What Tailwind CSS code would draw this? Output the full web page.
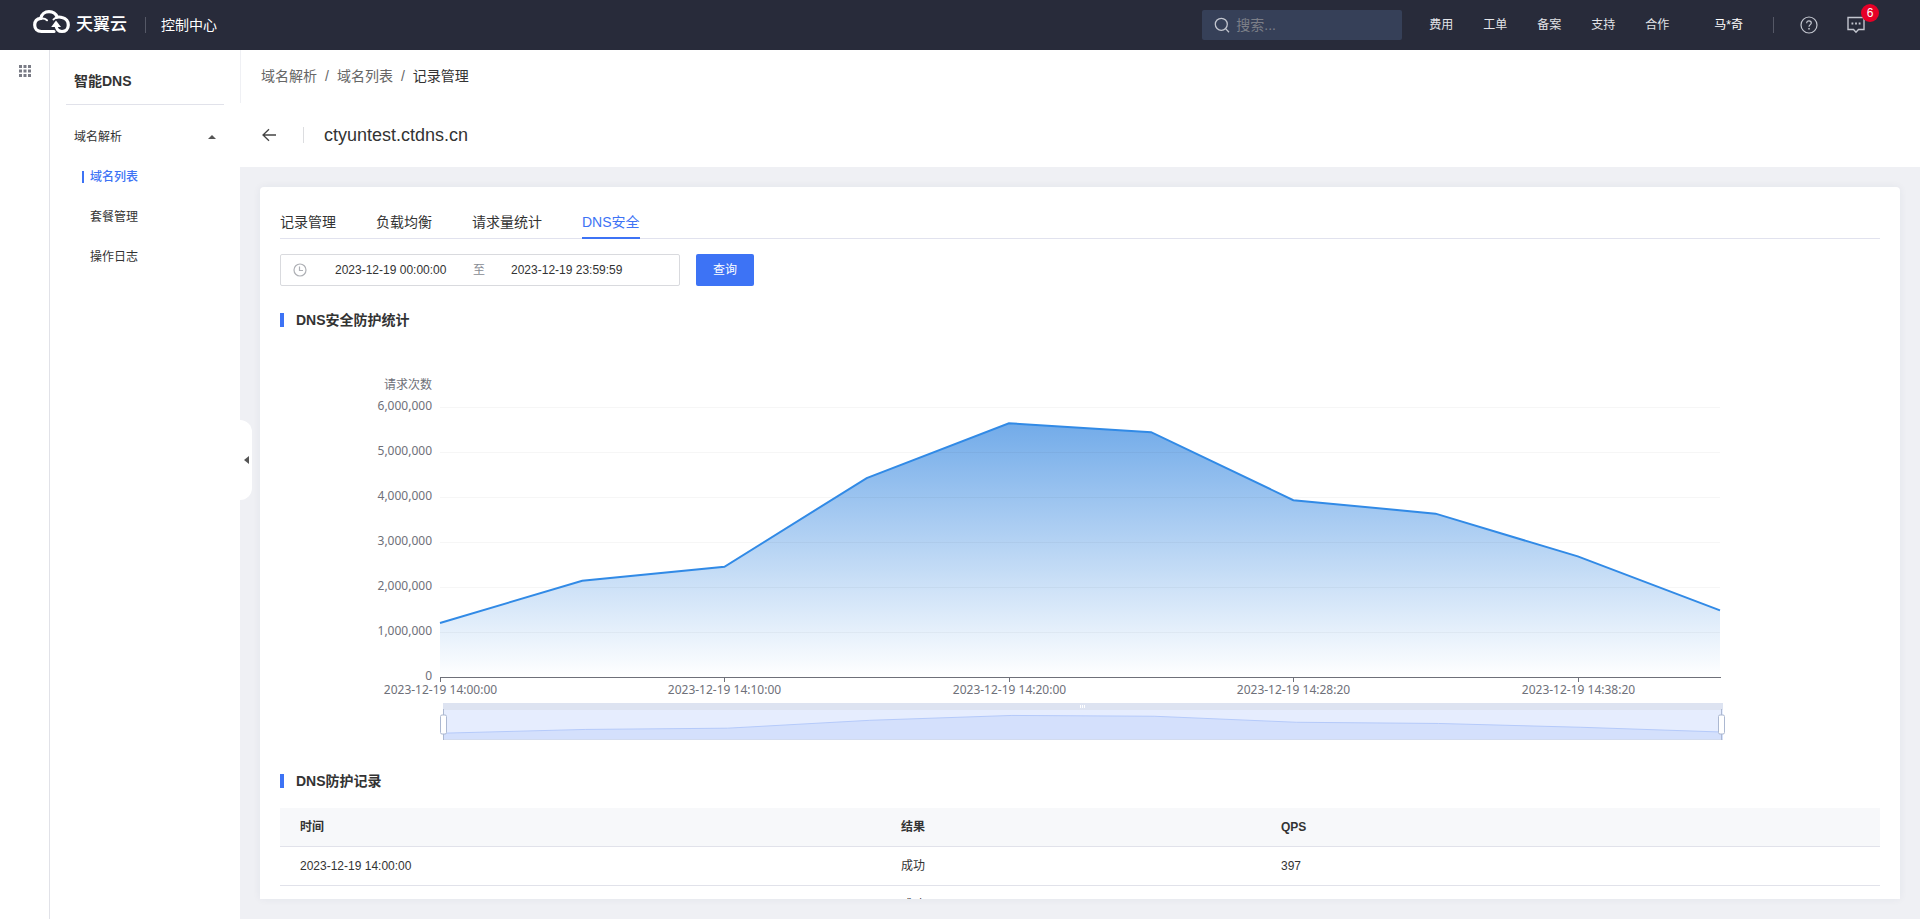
<!DOCTYPE html>
<html lang="zh-CN">
<head>
  <meta charset="UTF-8" />
  <meta name="viewport" content="width=device-width, initial-scale=1.0" />
  <title>智能DNS</title>
  <script src="https://cdn.jsdelivr.net/npm/@tailwindcss/browser@4"></script>
</head>
<body class="flex h-screen flex-col overflow-hidden bg-white font-['Liberation_Sans','Noto_Sans_CJK_SC',sans-serif] text-sm text-[#333]">

  <!-- Header -->
  <header class="flex h-[50px] shrink-0 items-center bg-[#282b3a] text-white">
    <a href="#" class="ml-8 flex items-center gap-1">
      <svg class="h-[30px] w-10" viewBox="0 0 40 30" fill="none" stroke="#fff" stroke-width="3.200" stroke-linecap="round">
        <path d="M22 21.500H9.500C5 21.500 2.700 18.500 2.700 15C2.700 11.300 5 8.700 8.800 8.300C9.500 4.300 12.800 1.700 17 1.700C21 1.700 24 4 25.200 7.200C27 6.800 28.500 7 30 7.500C34 8.500 36.300 11.500 36.300 15C36.300 19 33.500 21.500 30 21.500C26.500 21.500 24.200 19 24.200 15.500" />
        <path d="M9.500 8.700C11.500 8.400 13.500 9 15 10.300M25 7.400C23.500 7.800 22.300 8.500 21.500 9.500" stroke-width="2" />
        <path d="M19.200 17L24 10.500L29 17Z" fill="#fff" stroke="none" />
      </svg>
      <span class="text-[17px] font-medium leading-6">天翼云</span>
    </a>
    <span class="ml-[18px] h-4 w-px bg-[#555866]"></span>
    <a href="#" class="ml-[15px]">控制中心</a>

    <label class="ml-auto flex h-[30px] w-[200px] items-center rounded-xs bg-[#364058] pl-3">
      <svg class="h-4 w-4 shrink-0" viewBox="0 0 16 16" fill="none" stroke="#c3c6cf" stroke-width="1.300">
        <circle cx="7.300" cy="7.300" r="6" />
        <path d="M11.600 11.600L15 15.300" />
      </svg>
      <input type="text" placeholder="搜索..." aria-label="搜索" class="ml-1.5 w-36 bg-transparent text-sm outline-none placeholder:text-[#7c7f88]" />
    </label>
    <nav class="ml-[27px] flex gap-[30px] text-xs text-[#e3e4e8]">
      <a href="#">费用</a>
      <a href="#">工单</a>
      <a href="#">备案</a>
      <a href="#">支持</a>
      <a href="#">合作</a>
    </nav>
    <a href="#" class="ml-[45px] text-xs">马*奇</a>
    <span class="ml-[30px] h-4 w-px bg-[#555866]"></span>
    <button class="ml-[26px]" aria-label="帮助">
      <svg class="h-[18px] w-[18px]" viewBox="0 0 18 18" fill="none" stroke="#c3c6cf" stroke-width="1.200">
        <circle cx="9" cy="9" r="8" />
        <path d="M6.700 7.200C6.700 5.600 7.700 4.800 9 4.800C10.300 4.800 11.300 5.600 11.300 6.900C11.300 8.600 9 8.700 9 10.800" />
        <path d="M9 12V13.400" stroke-width="1.500" />
      </svg>
    </button>
    <button class="relative mr-[55px] ml-[29px]" aria-label="消息">
      <svg class="h-[18px] w-[18px]" viewBox="0 0 18 18" fill="none" stroke="#c3c6cf" stroke-width="1.400">
        <path d="M1 1.500H17V13.500H11.500L9 16.300L6.500 13.500H1Z" />
        <path d="M4.500 7.500H6.300M8.100 7.500H9.900M11.700 7.500H13.500" stroke-width="1.800" />
      </svg>
      <span class="absolute -top-3 left-3.5 h-[18px] w-[18px] rounded-full bg-[#e60027] text-xs leading-[18px]">6</span>
    </button>
  </header>

  <div class="flex min-h-0 flex-1">
    <!-- App rail -->
    <div class="flex w-[50px] shrink-0 justify-center border-r border-[#e1e2e8] pt-[15px]">
      <button class="h-3 w-3" aria-label="全部产品">
        <svg viewBox="0 0 12 12" fill="#797b85">
          <path d="M0 0h3v3H0zM4.500 0h3v3h-3zM9 0h3v3H9zM0 4.500h3v3H0zM4.500 4.500h3v3h-3zM9 4.500h3v3H9zM0 9h3v3H0zM4.500 9h3v3h-3zM9 9h3v3H9z" />
        </svg>
      </button>
    </div>

    <!-- Side menu -->
    <aside class="relative w-[190px] shrink-0 px-4">
      <h2 class="h-[55px] border-b border-[#e1e2ea] pt-[5px] pl-2 font-bold leading-[52px]">智能DNS</h2>
      <button class="mt-3 flex h-10 w-full items-center justify-between pr-2 pl-2 text-xs">
        域名解析
        <svg class="h-1 w-2" viewBox="0 0 8 4" fill="#555"><path d="M4 0L8 4H0Z" /></svg>
      </button>
      <ul class="pl-4 text-xs leading-10">
        <li class="flex items-center text-[#3d73f5]"><span class="h-3 w-0.5 bg-[#3d73f5]"></span><a href="#" class="ml-1.5 font-medium">域名列表</a></li>
        <li class="pl-2"><a href="#">套餐管理</a></li>
        <li class="pl-2"><a href="#">操作日志</a></li>
      </ul>
      <button class="absolute top-[370px] left-full flex h-20 w-3 items-center justify-center rounded-r-xl bg-white" aria-label="收起菜单">
        <svg class="h-2 w-[5px]" viewBox="0 0 5 8" fill="#555"><path d="M5 0V8L0 4Z" /></svg>
      </button>
    </aside>

    <main class="flex min-w-0 flex-1 flex-col bg-[#eff0f4]">
      <div class="h-[117px] shrink-0 bg-white">
        <nav class="flex h-[53px] items-center gap-2 border-l border-[#eff0f4] pb-0.5 pl-5 text-[#666]">
          <a href="#">域名解析</a>
          <span>/</span>
          <a href="#">域名列表</a>
          <span>/</span>
          <span class="text-[#333]">记录管理</span>
        </nav>
        <div class="flex h-16 items-center pl-[22px]">
          <button aria-label="返回">
            <svg class="h-3.5 w-3.5" viewBox="0 0 14 14" fill="none" stroke="#444" stroke-width="1.300"><path d="M14 7H1M7 1.200L1 7L7 12.800" /></svg>
          </button>
          <span class="ml-[27px] h-4 w-px bg-[#dcdde0]"></span>
          <h1 class="ml-5 text-lg">ctyuntest.ctdns.cn</h1>
        </div>
      </div>

      <section class="m-5 min-h-0 flex-1 overflow-hidden rounded-t-sm bg-white px-5 pt-6 shadow-[0_0_8px_rgba(40,50,90,0.06)]">
        <nav class="flex gap-10 border-b border-[#e1e2ee] leading-[22px]">
          <a href="#" class="pb-1">记录管理</a>
          <a href="#" class="pb-1">负载均衡</a>
          <a href="#" class="pb-1">请求量统计</a>
          <a href="#" class="-mb-px border-b-2 border-[#3d73f5] pb-1 text-[#3d73f5]">DNS安全</a>
        </nav>

        <form class="mt-[15px] flex gap-4 text-xs">
          <div class="flex h-8 w-[400px] items-center rounded-xs border border-[#d9dade] pl-3">
            <svg class="h-3.5 w-3.5 shrink-0" viewBox="0 0 14 14" fill="none" stroke="#aeb0b5" stroke-width="1.200"><circle cx="7" cy="7" r="6" /><path d="M6.500 3.500V7.500H10" /></svg>
            <input type="text" value="2023-12-19 00:00:00" aria-label="开始时间" class="ml-2 w-[158px] px-5 outline-none" />
            <span class="text-[#888b93]">至</span>
            <input type="text" value="2023-12-19 23:59:59" aria-label="结束时间" class="ml-1.5 w-[158px] px-5 outline-none" />
          </div>
          <button type="button" class="h-8 w-[58px] rounded-xs bg-[#3d73f5] text-white">查询</button>
        </form>

        <h2 class="mt-6 flex h-5 items-center gap-3 font-bold"><span class="h-3.5 w-1 bg-[#3d73f5]"></span>DNS安全防护统计</h2>

        <svg id="chart" class="mt-px block h-auto w-full font-['Noto_Sans','Noto_Sans_CJK_SC',sans-serif] text-xs" viewBox="0 0 1600 440" role="img" aria-label="请求次数"></svg>

        <h2 class="flex h-5 items-center gap-3 font-bold"><span class="h-3.5 w-1 bg-[#3d73f5]"></span>DNS防护记录</h2>

        <table class="mt-[17px] w-full table-fixed border-separate border-spacing-0 text-left text-xs">
          <thead class="bg-[#f7f8fa]">
            <tr class="h-[39px] [&>th]:border-b [&>th]:border-[#e1e2ea]">
              <th class="w-[601px] pl-5 font-bold">时间</th>
              <th class="w-[380px] pl-5 font-bold">结果</th>
              <th class="pl-5 font-bold">QPS</th>
            </tr>
          </thead>
          <tbody>
            <tr class="h-[39px] [&>td]:border-b [&>td]:border-[#e1e2ea]">
              <td class="pl-5">2023-12-19 14:00:00</td>
              <td class="pl-5">成功</td>
              <td class="pl-5">397</td>
            </tr>
            <tr class="h-[39px] [&>td]:border-b [&>td]:border-[#e1e2ea]">
              <td class="pl-5"></td>
              <td class="pl-5">成功</td>
              <td class="pl-5"></td>
            </tr>
          </tbody>
        </table>
      </section>
    </main>
  </div>

  <script>
    const requests = [1200000, 2140000, 2450000, 4420000, 5640000, 5440000, 3930000, 3630000, 2680000, 1480000];
    const times = ["2023-12-19 14:00:00", "2023-12-19 14:10:00", "2023-12-19 14:20:00", "2023-12-19 14:28:20", "2023-12-19 14:38:20"];

    const left = 160, right = 1440, bottom = 346, unit = 45;
    const step = (right - left) / (requests.length - 1);

    const line = requests.map((v, i) => `${left + i * step},${bottom - v / 1000000 * unit}`).join(" ");
    const mini = requests.map((v, i) => `${left + 3 + i * step},${407 - v / 1000000 * 4}`).join(" ");

    // y axis
    let yAxis = "";
    for (let n = 0; n <= 6; n++) {
      const y = bottom - n * unit;
      yAxis += `<text x="152" y="${y + 3}" text-anchor="end" fill="#6e7079">${(n * 1000000).toLocaleString("en-US")}</text>`;
      if (n > 0) yAxis += `<path d="M${left} ${y + 0.5}H${right}" stroke="#000" stroke-opacity="0.035" />`;
    }

    // x axis
    const xAxis = times.map((t, i) => {
      const x = Math.round(left + i * step * 2) + 0.5;
      return `<path d="M${x} ${bottom}v5" stroke="#6e7079" /><text x="${x}" y="363" text-anchor="middle" fill="#6e7079">${t}</text>`;
    }).join("");

    const handle = x => `
      <path d="M${x} 378V409" stroke="#acb8d1" />
      <rect x="${x - 3}" y="384" width="6" height="19" rx="1.500" fill="#fff" stroke="#acb8d1" />`;

    document.getElementById("chart").innerHTML = `
      <defs>
        <linearGradient id="area" x1="0" y1="0" x2="0" y2="1">
          <stop offset="0" stop-color="#72abe9" />
          <stop offset="1" stop-color="#fff" />
        </linearGradient>
      </defs>
      <text x="152" y="58" text-anchor="end" fill="#6e7079">请求次数</text>
      <polygon points="${left},${bottom} ${line} ${right},${bottom}" fill="url(#area)" />
      ${yAxis}
      <polyline points="${line}" fill="none" stroke="#318ae6" stroke-width="2" />
      <path d="M${left} 346.500H${right + 1}" stroke="#6e7079" />
      ${xAxis}
      <rect x="163" y="372" width="1280" height="7" fill="#dde3f1" />
      <rect x="163" y="379" width="1280" height="30" fill="#e6edfe" />
      <polygon points="163,409 ${mini} 1443,409" fill="#d4e0fc" />
      <polyline points="${mini}" fill="none" stroke="#b5cafa" />
      <path d="M163 408.500H1443" stroke="#d2dbee" />
      <path d="M800.500 374v3M802.500 374v3M804.500 374v3" stroke="#fff" />
      ${handle(163.500)}
      ${handle(1441.500)}`;
  </script>
</body>
</html>
